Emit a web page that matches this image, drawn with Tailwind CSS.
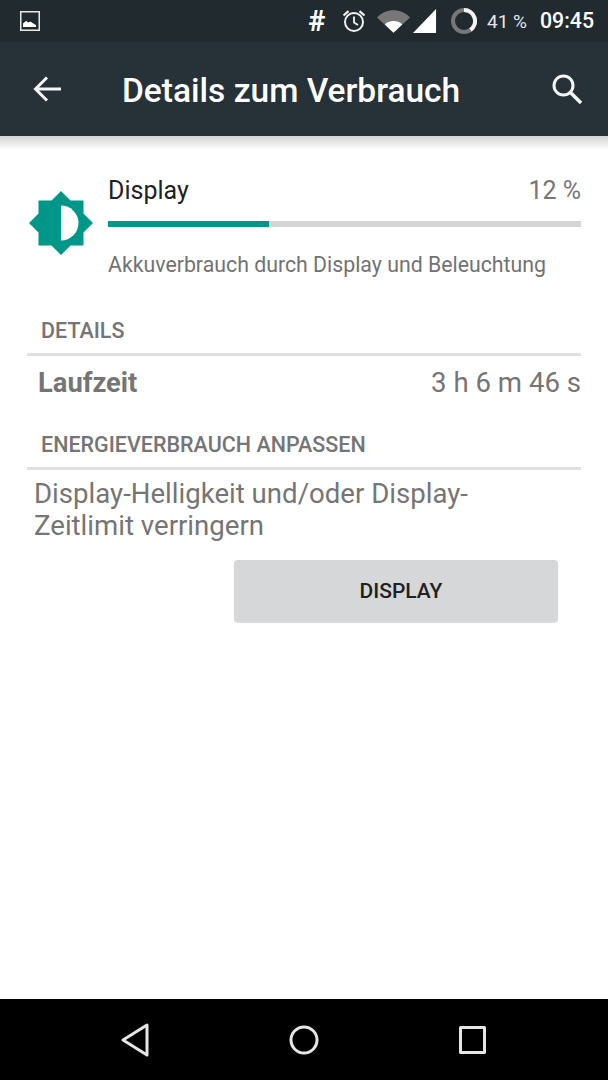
<!DOCTYPE html>
<html lang="de">
<head>
    <meta charset="UTF-8">
    <meta name="viewport" content="width=device-width, initial-scale=1.0">
    <title>Details zum Verbrauch</title>
    <script src="https://cdn.jsdelivr.net/npm/@tailwindcss/browser@4"></script>
</head>
<body class="bg-white h-[1080px] w-[608px] overflow-hidden flex flex-col font-['Roboto',sans-serif]">
    <!-- status bar -->
    <div class="h-[42px] bg-[#212a2f] flex items-center text-white shrink-0">
        <svg class="ml-[20px]" width="20" height="20" viewBox="0 0 20 20">
            <rect x="0.75" y="0.75" width="18.5" height="18.5" fill="none" stroke="#e8e8e8" stroke-width="1.5"/>
            <path d="M3 16v-3.5l3-2.5 2.5 1.5 2-1 2 1.5 3.500 2V16z" fill="#fff"/>
        </svg>
        <div class="ml-auto flex items-center">
            <span class="text-[29px] font-bold leading-none w-[20px] text-center">#</span>
            <svg class="ml-[14px]" width="26" height="26" viewBox="0 0 26 26" fill="none" stroke="#f2f2f2">
                <circle cx="13" cy="14" r="9" stroke-width="2"/>
                <path d="M13 8.500V14.500L17 17" stroke-width="1.800"/>
                <path d="M2.500 7.500 7.500 3.200M23.500 7.500 18.500 3.200" stroke-width="2.200"/>
            </svg>
            <svg class="ml-[10px]" width="33" height="24" viewBox="0 0 34 24">
                <path d="M0 8.500C9.500 -1.500 24.500 -1.500 34 8.500L17 24z" fill="#777"/>
                <path d="M8 15.500C13 11 21 11 26 15.500L17 24z" fill="#fff"/>
            </svg>
            <svg class="ml-[3px]" width="24" height="24" viewBox="0 0 25 25"><path d="M0 25 24 0V25z" fill="#fff"/></svg>
            <svg class="ml-[14px]" width="26" height="26" viewBox="0 0 26 26" fill="none" stroke-width="4">
                <circle cx="13" cy="13" r="11" stroke="#777"/>
                <path d="M13 2A11 11 0 0 1 19.500 21.900" stroke="#f4f4f4"/>
            </svg>
            <span class="ml-[10px] text-[19px] leading-none text-[#e4e6e7]">41 %</span>
            <span class="ml-[13px] mr-[14px] text-[21.300px] font-medium leading-none">09:45</span>
        </div>
    </div>

    <!-- toolbar -->
    <div class="relative h-[95px] bg-[#263238] flex items-center text-white shrink-0 border-b border-[#5b6469]">
        <svg class="ml-[33px]" width="30" height="30" viewBox="0 0 30 30" fill="none" stroke="#f5f5f5" stroke-width="3">
            <path d="M28 15H3M14 3.500 2.500 15 14 26.500"/>
        </svg>
        <h1 class="ml-[59px] mt-[3px] text-[33.500px] font-medium leading-none">Details zum Verbrauch</h1>
        <svg class="ml-auto mr-[25px]" width="32" height="32" viewBox="0 0 32 32" fill="none" stroke="#f5f5f5" stroke-width="3">
            <circle cx="12.500" cy="12.500" r="9.500"/>
            <path d="M19.500 19.500 30 30" stroke-width="3.500"/>
        </svg>
        <div class="absolute left-0 right-0 top-full h-[14px] bg-gradient-to-b from-[#d4d4d4] to-white"></div>
    </div>

    <main class="flex-1 flex flex-col">
        <!-- usage row -->
        <div class="flex mt-[38px] pr-[27px]">
            <svg class="ml-[29px] mt-[16px] shrink-0" width="64" height="64" viewBox="0 0 64 64">
                <path d="M32 0 41.500 9.500H54.500V22.500L64 32 54.500 41.500V54.500H41.500L32 64 22.500 54.500H9.500V41.500L0 32 9.500 22.500V9.500H22.500z" fill="#009688"/>
                <path d="M32 14.500A17.500 17.500 0 0 1 32 49.500z" fill="#fff"/>
            </svg>
            <div class="ml-[15px] flex-1 min-w-0">
                <div class="flex justify-between items-center h-[30px]">
                    <span class="text-[25px] leading-none text-[#212121]">Display</span>
                    <span class="text-[25px] leading-none text-[#757575]">12 %</span>
                </div>
                <div class="mt-[16px] h-[6px] bg-[#d4d4d4]">
                    <div class="h-full w-[161px] bg-[#009688]"></div>
                </div>
                <p class="mt-[24px] text-[21.300px] leading-[28px] text-[#727272]">Akkuverbrauch durch Display und Beleuchtung</p>
            </div>
        </div>

        <!-- details -->
        <section class="mx-[27px] mt-[40px]">
            <h2 class="pl-[14px] text-[21.500px] font-medium leading-[24px] text-[#757575]">DETAILS</h2>
            <div class="mt-[10px] h-[3px] bg-[#e0e0e0]"></div>
            <div class="flex justify-between items-center h-[56px] pl-[11px]">
                <span class="text-[27.300px] font-bold leading-none text-[#757575]">Laufzeit</span>
                <span class="-mt-[2px] text-[27.600px] leading-none text-[#757575]">3 h 6 m 46 s</span>
            </div>
        </section>

        <!-- adjust -->
        <section class="mx-[27px] mt-[21px]">
            <h2 class="pl-[14px] text-[21.500px] font-medium leading-[24px] text-[#757575]">ENERGIEVERBRAUCH ANPASSEN</h2>
            <div class="mt-[10px] h-[3px] bg-[#e0e0e0]"></div>
            <p class="mt-[8px] pl-[7px] text-[27.600px] leading-[32px] text-[#757575]">Display-Helligkeit und/oder Display-<br>Zeitlimit verringern</p>
            <button class="block ml-[207px] mt-[18px] w-[324px] h-[62px] pl-[10px] pt-[2px] rounded-[4px] bg-[#d6d7d9] shadow-[0_1px_1px_rgba(0,0,0,0.15)] text-[21px] font-medium text-[#212121]">DISPLAY</button>
        </section>
    </main>

    <!-- nav bar -->
    <nav class="h-[81px] bg-black shrink-0 flex items-center justify-center">
        <div class="flex items-center gap-[140px] -ml-[1px]">
            <svg width="28" height="34" viewBox="0 0 28 34" fill="none" stroke="#e6e6e6" stroke-width="3" stroke-linejoin="round">
                <path d="M26 2V32L2 17z"/>
            </svg>
            <svg width="30" height="30" viewBox="0 0 30 30" fill="none" stroke="#e6e6e6" stroke-width="3">
                <circle cx="15" cy="15" r="13"/>
            </svg>
            <svg width="27" height="28" viewBox="0 0 27 28" fill="none" stroke="#e6e6e6" stroke-width="3" stroke-linejoin="round">
                <rect x="1.500" y="1.500" width="24" height="25"/>
            </svg>
        </div>
    </nav>
</body>
</html>
